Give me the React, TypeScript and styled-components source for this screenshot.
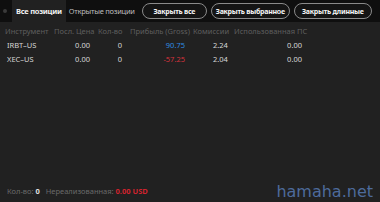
import React from 'react';
import styled, { createGlobalStyle } from 'styled-components';

const Global = createGlobalStyle`
  html, body { margin: 0; padding: 0; background: #1f1f1f; }
  body { font-family: "Noto Sans", "Open Sans", sans-serif; }
`

const Panel = styled.div`
  width: 380px;
  height: 202px;
  background: #212121;
  display: flex;
  flex-direction: column;
  overflow: hidden;
  position: relative;
`

const TopBar = styled.div`
  height: 22px;
  flex-shrink: 0;
  background: #0f0f0f;
  display: flex;
  align-items: center;
  padding-left: 3px;
`

const Dot = styled.span`
  width: 4px;
  height: 4px;
  border-radius: 50%;
  background: #3a3a3a;
  margin-right: 5px;
  flex-shrink: 0;
`

const Tab = styled.div<{ $active?: boolean }>`
  height: 22px;
  display: flex;
  align-items: center;
  padding: 0 ${({ $active }) => ($active ? 4 : 3)}px;
  font-size: 7.5px;
  letter-spacing: -0.25px;
  white-space: nowrap;
  font-weight: ${({ $active }) => ($active ? 700 : 400)};
  color: ${({ $active }) => ($active ? '#f2f2f2' : '#bdbdbd')};
  background: ${({ $active }) => ($active ? '#212121' : 'transparent')};
`

const Pill = styled.button<{ $w: number }>`
  width: ${({ $w }) => $w}px;
  height: 16px;
  margin-left: 4px;
  padding: 0;
  border: 1px solid #8a8a8a;
  border-radius: 8px;
  background: #141414;
  color: #f4f4f4;
  font-family: inherit;
  font-size: 7px;
  letter-spacing: -0.25px;
  font-weight: 700;
  display: flex;
  align-items: center;
  justify-content: center;
  white-space: nowrap;
  flex-shrink: 0;
`

const Table = styled.div`
  display: grid;
  grid-template-columns: 49px 44px 32px 63px 41px 76px;
  padding: 2px 0 0 5px;
`

const Head = styled.div`
  font-size: 7.5px;
  color: #5f5f5f;
  height: 14px;
  line-height: 14px;
  white-space: nowrap;
`

const Cell = styled.div<{ $align?: string; $color?: string }>`
  font-size: 7.5px;
  color: ${({ $color }) => $color || '#d6d6d6'};
  text-align: ${({ $align }) => $align || 'right'};
  height: 14px;
  line-height: 14px;
  white-space: nowrap;
  padding-right: 8px;
`

const Spacer = styled.div`
  flex: 1;
`

const Footer = styled.div`
  height: 22px;
  display: flex;
  align-items: center;
  padding-left: 7px;
  font-size: 7.5px;
  color: #6a6a6a;
  gap: 6px;
`

const Strong = styled.b<{ $color?: string }>`
  color: ${({ $color }) => $color || '#e0e0e0'};
  font-weight: 700;
`

const Watermark = styled.div`
  position: absolute;
  right: 7px;
  bottom: 1px;
  font-family: "DejaVu Sans", sans-serif;
  font-size: 16px;
  color: #4d6b9c;
`

const rows = [
  { name: 'IRBT–US', price: '0.00', qty: '0', pnl: '90.75', pnlColor: '#2f8be0', fee: '2.24', margin: '0.00' },
  { name: 'XEC–US', price: '0.00', qty: '0', pnl: '-57.25', pnlColor: '#d1323c', fee: '2.04', margin: '0.00' },
]

const App = () => {
  return <Panel>
    <Global />
    <TopBar>
      <Dot />
      <Tab $active>Все позиции</Tab>
      <Tab>Открытые позиции</Tab>
      <Pill $w={65}>Закрыть все</Pill>
      <Pill $w={79}>Закрыть выбранное</Pill>
      <Pill $w={78}>Закрыть длинные</Pill>
    </TopBar>
    <Table>
      <Head>Инструмент</Head>
      <Head>Посл. Цена</Head>
      <Head>Кол-во</Head>
      <Head>Прибыль (Gross)</Head>
      <Head>Комиссии</Head>
      <Head>Использованная ПС</Head>
      {rows.map(r => <React.Fragment key={r.name}>
        <Cell $align="left" style={{ paddingLeft: 2 }}>{r.name}</Cell>
        <Cell>{r.price}</Cell>
        <Cell>{r.qty}</Cell>
        <Cell $color={r.pnlColor}>{r.pnl}</Cell>
        <Cell $align="left" style={{ paddingLeft: 20 }}>{r.fee}</Cell>
        <Cell>{r.margin}</Cell>
      </React.Fragment>)}
    </Table>
    <Spacer />
    <Footer>
      <span>Кол-во: <Strong>0</Strong></span>
      <span>Нереализованная: <Strong $color="#d1232e">0.00 USD</Strong></span>
    </Footer>
    <Watermark>hamaha.net</Watermark>
  </Panel>
}

export default App;
